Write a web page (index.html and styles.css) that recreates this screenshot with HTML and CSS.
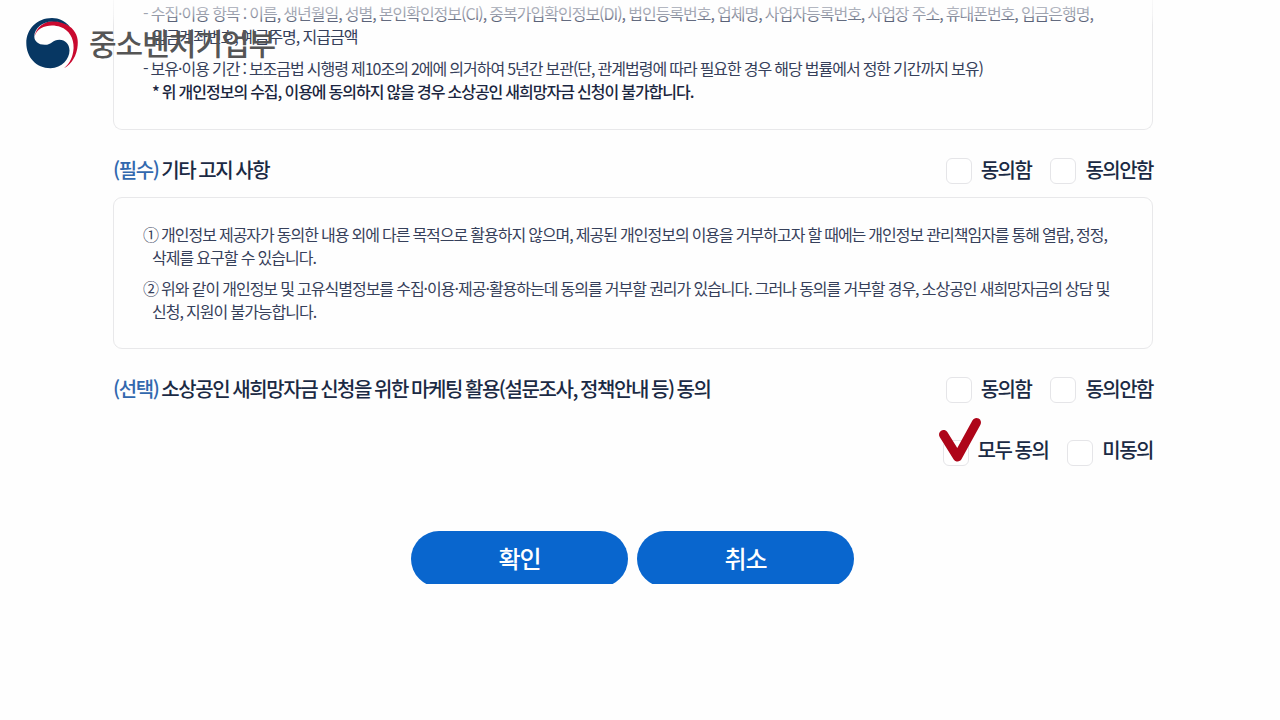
FILE: index.html
```html
<!DOCTYPE html>
<html lang="ko">
<head>
<meta charset="utf-8">
<title>소상공인 새희망자금 신청 동의</title>
<link rel="stylesheet" href="styles.css">
</head>
<body>
<main class="page">
  <section class="terms terms-top">
    <div class="item">
      <p class="line line-wide">- 수집·이용 항목 : 이름, 생년월일, 성별, 본인확인정보(CI), 중복가입확인정보(DI), 법인등록번호, 업체명, 사업자등록번호, 사업장 주소, 휴대폰번호, 입금은행명,</p>
      <p class="line indent">입금계좌번호, 예금주명, 지급금액</p>
    </div>
    <div class="item">
      <p class="line">- 보유·이용 기간 : 보조금법 시행령 제10조의 2에에 의거하여 5년간 보관(단, 관계법령에 따라 필요한 경우 해당 법률에서 정한 기간까지 보유)</p>
      <p class="line indent strong">* 위 개인정보의 수집, 이용에 동의하지 않을 경우 소상공인 새희망자금 신청이 불가합니다.</p>
    </div>
  </section>

  <header class="heading">
    <h2 class="title"><span class="tag">(필수)</span> 기타 고지 사항</h2>
    <div class="choices">
      <label class="choice"><span class="box"></span><span>동의함</span></label>
      <label class="choice"><span class="box"></span><span>동의안함</span></label>
    </div>
  </header>
  <section class="terms terms-notice">
    <div class="item">
      <p class="line">① 개인정보 제공자가 동의한 내용 외에 다른 목적으로 활용하지 않으며, 제공된 개인정보의 이용을 거부하고자 할 때에는 개인정보 관리책임자를 통해 열람, 정정,</p>
      <p class="line indent">삭제를 요구할 수 있습니다.</p>
    </div>
    <div class="item">
      <p class="line line-wide">② 위와 같이 개인정보 및 고유식별정보를 수집·이용·제공·활용하는데 동의를 거부할 권리가 있습니다. 그러나 동의를 거부할 경우, 소상공인 새희망자금의 상담 및</p>
      <p class="line indent">신청, 지원이 불가능합니다.</p>
    </div>
  </section>

  <header class="heading">
    <h2 class="title"><span class="tag">(선택)</span> 소상공인 새희망자금 신청을 위한 마케팅 활용(설문조사, 정책안내 등) 동의</h2>
    <div class="choices">
      <label class="choice"><span class="box"></span><span>동의함</span></label>
      <label class="choice"><span class="box"></span><span>동의안함</span></label>
    </div>
  </header>

  <div class="choices choices-all">
    <label class="choice"><span class="box"><svg class="check" viewBox="0 0 46 50" width="46" height="50"><path d="M6.500 20.500 L20.500 43 L39.500 8.500" fill="none" stroke="#ae0519" stroke-width="9" stroke-linecap="round" stroke-linejoin="round"/></svg></span><span>모두 동의</span></label>
    <label class="choice"><span class="box"></span><span>미동의</span></label>
  </div>

  <div class="actions">
    <span class="clip"><button class="pill">확인</button></span>
    <span class="clip"><button class="pill">취소</button></span>
  </div>
</main>

<div class="fade"></div>
<div class="brand">
  <svg class="emblem" viewBox="0 0 54 54" width="54" height="54">
    <path d="M9.500 20 C11 9 21 3 31 4 C36 4.500 41 6.500 44.300 9.300 C51 14 53.500 21 52.700 28 C52 38 47 47 39 51.300 C45 46 48 40 48.600 31 C49 21 44 13 35.500 10 C26 6.500 12 9 9.500 20Z" fill="#c9092f"/>
    <path d="M45 9.800 C40 4 34 1 27 1 C12 1 1.300 12 1.300 26 C1.300 40 11 51.200 25.500 51.200 C37 51 44.500 42 44.500 33.500 C44.500 27 40 22.700 34.500 22.700 C27.500 22.700 27 27.800 19.800 27.800 C13 27.800 9.300 24 9.300 19.500 C9.500 11 18 4.800 27 4.600 C34 4.400 40 6.500 45 9.800Z" fill="#073763"/>
  </svg>
  <span class="brand-name">중소벤처기업부</span>
</div>
</body>
</html>
```
FILE: styles.css
```css
* { box-sizing: border-box; margin: 0; padding: 0; }
body {
  width: 1280px;
  height: 720px;
  overflow: hidden;
  position: relative;
  background: #fefefe;
  color: #1b2a44;
  font-family: "Noto Sans CJK KR", "Noto Sans", sans-serif;
}
.page { width: 1040px; margin-left: 113px; }
.terms {
  border: 1px solid #e8e8ea;
  border-radius: 9px;
  padding-left: 29px;
  display: flex;
  flex-direction: column;
  gap: 9px;
}
.terms-top {
  height: 129.500px;
  border-top: 0;
  border-radius: 0 0 9px 9px;
  padding-top: 2px;
}
.terms-notice { height: 152px; padding-top: 25px; gap: 8px; }
.line {
  font-size: 16px;
  line-height: 23px;
  letter-spacing: -1px;
  word-spacing: -0.460px;
  white-space: nowrap;
  color: #36405a;
}
.line-wide { word-spacing: -0.370px; }
.indent { padding-left: 9px; word-spacing: -0.300px; }
.strong { font-weight: 500; color: #1b2640; word-spacing: -0.450px; }
.heading {
  height: 67.500px;
  padding-top: 13px;
  display: flex;
  align-items: center;
  justify-content: space-between;
}
.title {
  font-size: 20px;
  line-height: 28px;
  font-weight: 500;
  letter-spacing: -1.420px;
  word-spacing: -1.200px;
  white-space: nowrap;
}
.tag { color: #3268ae; }
.choices { display: flex; gap: 19px; justify-content: flex-end; }
.choice {
  display: flex;
  align-items: center;
  gap: 9px;
  font-size: 20px;
  line-height: 28px;
  font-weight: 500;
  letter-spacing: -1.500px;
  word-spacing: -1px;
  white-space: nowrap;
}
.box {
  position: relative;
  top: 1px;
  width: 26px;
  height: 26px;
  border: 1px solid #e5e5e8;
  border-radius: 6px;
  background: #fff;
}
.choices-all { padding-top: 19px; }
.choices-all .box { top: 3px; }
.check { position: absolute; left: -7px; top: -27px; }
.actions {
  margin-top: 67px;
  padding-right: 1px;
  display: flex;
  justify-content: center;
  gap: 9px;
}
.clip { height: 53px; overflow: hidden; }
.pill {
  display: block;
  width: 217px;
  height: 56px;
  padding-bottom: 3px;
  border: 0;
  border-radius: 28px;
  background: #0966ce;
  color: #fff;
  font-family: inherit;
  font-size: 24px;
  font-weight: 500;
  letter-spacing: -1px;
}
.fade {
  position: absolute;
  left: 0;
  top: 0;
  width: 1280px;
  height: 25px;
  background: linear-gradient(rgba(254,254,254,.75), rgba(254,254,254,.5) 60%, rgba(254,254,254,0));
}
.brand {
  position: absolute;
  left: 25px;
  top: 17px;
  display: flex;
  align-items: center;
  gap: 10px;
}
.brand-name {
  font-size: 30px;
  line-height: 44px;
  margin-top: -5px;
  font-weight: 500;
  letter-spacing: -1px;
  color: #555;
  white-space: nowrap;
}
```
